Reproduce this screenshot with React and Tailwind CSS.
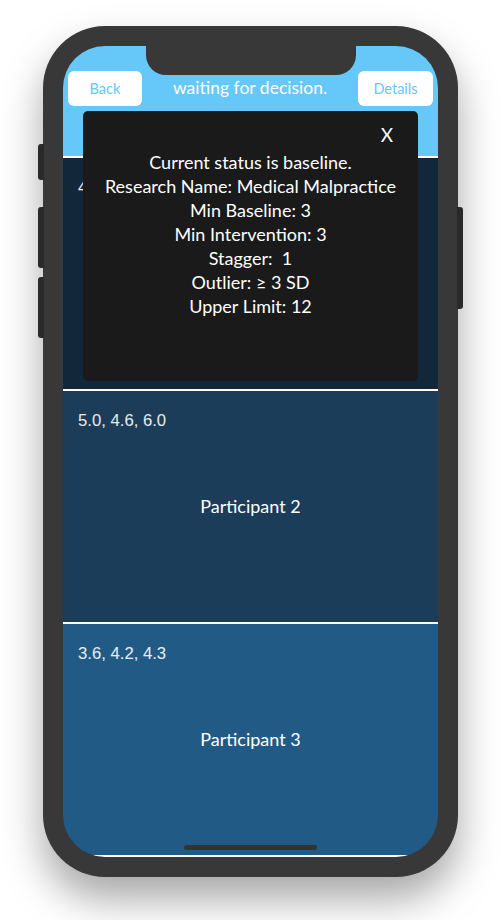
import React from "react";

const avenir = { fontFamily: "Lato, 'Noto Sans', sans-serif" };

const participants = [
  { values: "4.8, 5.1, 4.9", name: "Participant 1", bg: "bg-[#12283a]" },
  { values: "5.0, 4.6, 6.0", name: "Participant 2", bg: "bg-[#1b3d5a]" },
  { values: "3.6, 4.2, 4.3", name: "Participant 3", bg: "bg-[#225a86]" },
];

const details = [
  "Current status is baseline.",
  "Research Name: Medical Malpractice",
  "Min Baseline: 3",
  "Min Intervention: 3",
  "Stagger:  1",
  "Outlier: \u2265 3 SD",
  "Upper Limit: 12",
];

function ParticipantRow({ values, name, bg }) {
  return (
    <div className={`grid h-[233px] border-t-2 border-white ${bg}`}>
      <div className="col-start-1 row-start-1 self-start pl-[15px] pt-[19px] text-[16.7px] leading-[22px] text-white/90 font-['Liberation_Sans',Arial,sans-serif]">
        {values}
      </div>
      <div
        className="col-start-1 row-start-1 self-center justify-self-center text-[18px] text-white"
        style={avenir}
      >
        {name}
      </div>
    </div>
  );
}

export default function App() {
  return (
    <div className="min-h-screen w-full bg-white flex justify-center pt-[26px] pb-[43px]">
      <div className="relative">
        {/* side buttons */}
        <div className="absolute left-[-5px] top-[118px] h-[36px] w-[6px] rounded-l-[3px] bg-[#2a2a2a]" />
        <div className="absolute left-[-5px] top-[181px] h-[61px] w-[6px] rounded-l-[3px] bg-[#2a2a2a]" />
        <div className="absolute left-[-5px] top-[251px] h-[61px] w-[6px] rounded-l-[3px] bg-[#2a2a2a]" />
        <div className="absolute right-[-5px] top-[181px] h-[102px] w-[6px] rounded-r-[3px] bg-[#2a2a2a]" />

        <div className="w-[415px] rounded-[62px] bg-[#383838] p-[20px] shadow-[0_22px_40px_rgba(0,0,0,0.35)]">
          <div className="relative h-[811px] w-[375px] overflow-hidden rounded-[42px]">
            {/* header */}
            <div className="flex h-[110px] items-start justify-between bg-[#65c8f9] px-[5px] pt-[25px]">
              <button
                className="h-[35px] w-[74px] rounded-[6px] bg-white text-[14.5px] text-[#65c8f9]"
                style={avenir}
              >
                Back
              </button>
              <div
                className="flex h-[35px] items-center text-[17.5px] text-white"
                style={avenir}
              >
                waiting for decision.
              </div>
              <button
                className="h-[35px] w-[75px] rounded-[6px] bg-white text-[14.5px] text-[#65c8f9]"
                style={avenir}
              >
                Details
              </button>
            </div>

            {participants.map((p) => (
              <ParticipantRow key={p.name} {...p} />
            ))}
            <div className="h-[2px] bg-white" />

            {/* notch */}
            <div className="absolute left-[83px] top-0 h-[29px] w-[210px] rounded-b-[20px] bg-[#383838]" />

            {/* details popup */}
            <div
              className="absolute left-[20px] top-[65px] h-[270px] w-[335px] rounded-[5px] bg-[#1a1a1a] text-white"
              style={avenir}
            >
              <div className="flex justify-end pr-[25px] pt-[12px] text-[19px] leading-[24px]">
                X
              </div>
              <div className="flex flex-col items-center pt-[3px] text-[18px] leading-[24px]">
                {details.map((d) => (
                  <div key={d} className="whitespace-pre">
                    {d}
                  </div>
                ))}
              </div>
            </div>

            {/* home indicator */}
            <div className="absolute bottom-[7px] left-[121px] h-[5px] w-[133px] rounded-full bg-[#333333]" />
          </div>
        </div>
      </div>
    </div>
  );
}
